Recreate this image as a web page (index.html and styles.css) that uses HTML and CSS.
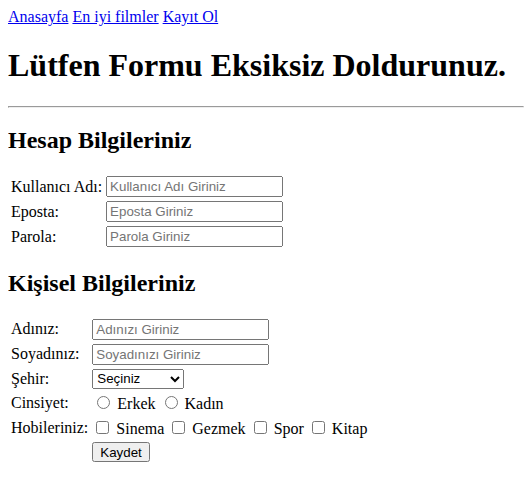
FILE: index.html
```html
<!DOCTYPE html>
<html lang="tr">
<head>
<meta charset="utf-8">
<title>Kayıt Ol</title>
<link rel="stylesheet" href="styles.css">
</head>
<body>
<div class="nav">
<a href="#">Anasayfa</a>
<a href="#">En iyi filmler</a>
<a href="#">Kayıt Ol</a>
</div>
<h1>Lütfen Formu Eksiksiz Doldurunuz.</h1>
<hr>
<form>
<h2>Hesap Bilgileriniz</h2>
<table>
<tr><td>Kullanıcı Adı:</td><td><input class="field" type="text" placeholder="Kullanıcı Adı Giriniz"></td></tr>
<tr><td>Eposta:</td><td><input class="field" type="email" placeholder="Eposta Giriniz"></td></tr>
<tr><td>Parola:</td><td><input class="field" type="password" placeholder="Parola Giriniz"></td></tr>
</table>
<h2>Kişisel Bilgileriniz</h2>
<table>
<tr><td>Adınız:</td><td><input class="field" type="text" placeholder="Adınızı Giriniz"></td></tr>
<tr><td>Soyadınız:</td><td><input class="field" type="text" placeholder="Soyadınızı Giriniz"></td></tr>
<tr><td>Şehir:</td><td><select class="city">
<option>Seçiniz</option>
<option>İstanbul</option>
<option>Ankara</option>
<option>İzmir</option>
</select></td></tr>
<tr class="r21"><td>Cinsiyet:</td><td><input type="radio" name="g"> Erkek <input type="radio" name="g"> Kadın</td></tr>
<tr class="r20"><td>Hobileriniz:</td><td><input type="checkbox"> Sinema <input type="checkbox"> Gezmek <input type="checkbox"> Spor <input type="checkbox"> Kitap</td></tr>
<tr><td></td><td><button class="save" type="button">Kaydet</button></td></tr>
</table>
</form>
</body>
</html>
```
FILE: styles.css
```css
body {
  font-family: "Liberation Serif", serif;
  color: #000;
  background: #fff;
  margin: 8px 1px 8px 8px;
}
h2 {
  margin: 19.4px 0 19px;
}
input, select, button {
  font-family: "Liberation Sans", Arial, sans-serif;
  font-size: 13.333px;
}
.field {
  box-sizing: border-box;
  width: 177px;
  height: 21px;
}
.city {
  box-sizing: border-box;
  width: 92px;
  height: 20px;
}
.save {
  box-sizing: border-box;
  height: 20px;
}
.r21 td {
  height: 21px;
}
.r20 td {
  height: 20px;
}
```
